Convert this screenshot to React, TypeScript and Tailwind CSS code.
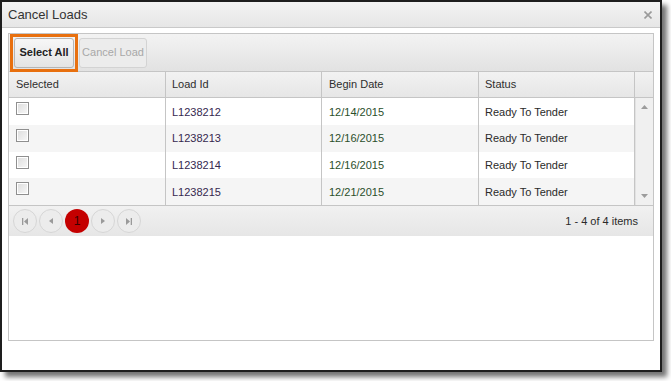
import React from "react";

const rows = [
  { id: "L1238212", date: "12/14/2015" },
  { id: "L1238213", date: "12/16/2015" },
  { id: "L1238214", date: "12/16/2015" },
  { id: "L1238215", date: "12/21/2015" },
];

function PagerBtn({ children, active }: { children?: React.ReactNode; active?: boolean }) {
  return (
    <div
      className={
        active
          ? "w-[24px] h-[24px] rounded-full bg-[#c40000] flex items-center justify-center text-[12px] text-[#3a0000]"
          : "w-[24px] h-[24px] rounded-full border border-[#d6d6d6] bg-[#ececec] flex items-center justify-center"
      }
    >
      {children}
    </div>
  );
}

export default function App() {
  return (
    <div className="w-[671px] h-[381px] bg-white" style={{ fontFamily: '"Liberation Sans", Arial, sans-serif' }}>
      <div className="w-[662px] h-[372px] border-2 border-[#1e1e1e] bg-white flex flex-col shadow-[5px_5px_5px_rgba(0,0,0,0.55)]">
        {/* Title bar */}
        <div className="h-[26px] flex items-center justify-between pl-[6px] pr-[8px] bg-gradient-to-b from-[#f3f3f3] to-[#e6e6e6] border-b border-[#c9c9c9] shrink-0">
          <span className="text-[13px] text-[#333] leading-none">Cancel Loads</span>
          <svg width="8" height="8" viewBox="0 0 8 8" className="mt-[1px]">
            <path d="M0.5 0.5 L7.5 7.5 M7.5 0.5 L0.5 7.5" stroke="#9a9a9a" strokeWidth="1.6" />
          </svg>
        </div>
        {/* Body */}
        <div className="pt-[5px] px-[6px]">
          <div className="h-[308px] border border-[#c5c5c5] flex flex-col">
            {/* toolbar */}
            <div className="h-[38px] bg-gradient-to-b from-[#f3f3f3] to-[#e2e2e2] border-b border-[#c5c5c5] flex items-center pl-[1px] gap-[1px] shrink-0">
              <div className="border-[3px] border-[#e8700f] p-[1px] shrink-0">
                <div className="w-[60px] h-[30px] border border-[#b5b5b5] rounded-[3px] bg-gradient-to-b from-[#f7f7f7] to-[#e4e4e4] flex items-center justify-center text-[11px] font-bold text-[#222] whitespace-nowrap">
                  Select All
                </div>
              </div>
              <div className="w-[68px] h-[30px] shrink-0 border border-[#d3d3d3] rounded-[3px] bg-[#ececec] flex items-center justify-center text-[11px] text-[#a8a8a8] whitespace-nowrap">
                Cancel Load
              </div>
            </div>
            {/* header */}
            <div className="grid grid-cols-[157px_156px_157px_156px_18px] h-[26px] bg-gradient-to-b from-[#f2f2f2] to-[#e6e6e6] border-b border-[#c5c5c5] text-[11px] text-[#2e2e2e] shrink-0">
              <div className="px-[7px] flex items-center border-r border-[#c5c5c5]">Selected</div>
              <div className="px-[6px] flex items-center border-r border-[#c5c5c5]">Load Id</div>
              <div className="px-[7px] flex items-center border-r border-[#c5c5c5]">Begin Date</div>
              <div className="px-[6px] flex items-center border-r border-[#c5c5c5]">Status</div>
              <div></div>
            </div>
            {/* rows + scrollbar */}
            <div className="flex h-[108px] border-b border-[#c5c5c5] shrink-0">
              <div className="w-[626px] flex flex-col">
                {rows.map((r, i) => (
                  <div
                    key={r.id}
                    className={
                      "grid grid-cols-[157px_156px_157px_156px] h-[27px] text-[11px] " +
                      (i % 2 === 1 ? "bg-[#f5f5f5]" : "bg-white")
                    }
                  >
                    <div className="px-[7px] pt-[4px] border-r border-[#c5c5c5]">
                      <div className="w-[13px] h-[13px] border border-[#8f8f8f] bg-gradient-to-br from-[#dcdcdc] to-[#f8f8f8] shadow-[inset_0_0_0_1px_#fff]"></div>
                    </div>
                    <div className="px-[6px] pt-[1px] flex items-center border-r border-[#c5c5c5] text-[#35284f]">{r.id}</div>
                    <div className="px-[7px] pt-[1px] flex items-center border-r border-[#c5c5c5] text-[#2b4f2b]">{r.date}</div>
                    <div className="px-[6px] pt-[1px] flex items-center border-r border-[#c5c5c5] text-[#2a2a2a]">Ready To Tender</div>
                  </div>
                ))}
              </div>
              <div className="w-[18px] bg-[#f0f0f0] border-l border-[#e2e2e2] flex flex-col items-center justify-between py-[7px]">
                <svg width="7" height="4" viewBox="0 0 7 4"><path d="M0 4 L3.5 0 L7 4 Z" fill="#9c9c9c" /></svg>
                <svg width="7" height="4" viewBox="0 0 7 4"><path d="M0 0 L3.5 4 L7 0 Z" fill="#9c9c9c" /></svg>
              </div>
            </div>
            {/* pager */}
            <div className="h-[30px] bg-gradient-to-b from-[#f1f1f1] to-[#e6e6e6] flex items-center justify-between pl-[4px] pr-[15px] shrink-0">
              <div className="flex items-center gap-[2px]">
                <PagerBtn>
                  <svg width="6" height="7" viewBox="0 0 6 7"><rect x="0" y="0" width="1.3" height="7" fill="#9a9a9a" /><path d="M6 0 L2 3.5 L6 7 Z" fill="#9a9a9a" /></svg>
                </PagerBtn>
                <PagerBtn>
                  <svg width="4" height="6" viewBox="0 0 4 6"><path d="M4 0 L0 3 L4 6 Z" fill="#9a9a9a" /></svg>
                </PagerBtn>
                <PagerBtn active>1</PagerBtn>
                <PagerBtn>
                  <svg width="4" height="6" viewBox="0 0 4 6"><path d="M0 0 L4 3 L0 6 Z" fill="#9a9a9a" /></svg>
                </PagerBtn>
                <PagerBtn>
                  <svg width="6" height="7" viewBox="0 0 6 7"><path d="M0 0 L4 3.5 L0 7 Z" fill="#9a9a9a" /><rect x="4.7" y="0" width="1.3" height="7" fill="#9a9a9a" /></svg>
                </PagerBtn>
              </div>
              <span className="text-[11px] text-[#2a2a2a]">1 - 4 of 4 items</span>
            </div>
            <div className="flex-1 bg-white"></div>
          </div>
        </div>
      </div>
    </div>
  );
}
